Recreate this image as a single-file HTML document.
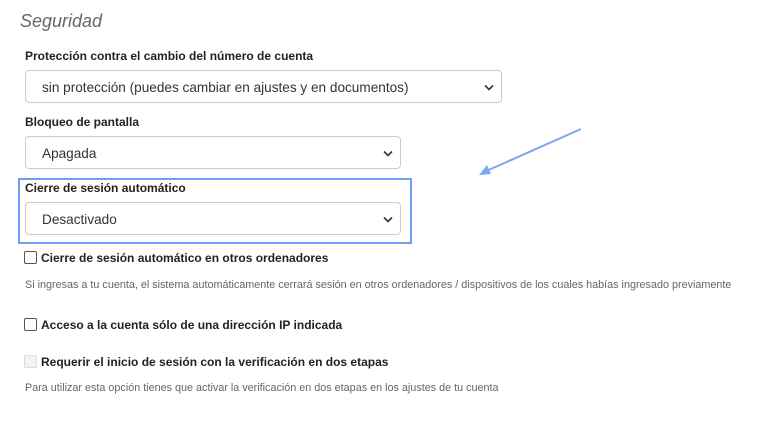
<!DOCTYPE html>
<html><head><meta charset="utf-8"><style>
body{margin:0;background:#fff;font-family:"Liberation Sans",Arial,sans-serif;width:768px;height:421px;position:relative;overflow:hidden;color:#222}
.a{position:absolute}
h1{position:absolute;left:20px;top:11px;margin:0;font-size:18px;font-style:italic;font-weight:normal;color:#666}
.l{position:absolute;left:25px;font-size:12px;font-weight:bold;color:#222}
.s{position:absolute;left:25px;height:31px;border:1px solid #ccc;border-radius:4px;background:#fff;font-size:13.6px;color:#333;line-height:33px;box-sizing:content-box}
.s span{position:absolute;left:16px}
.s svg{position:absolute;right:7px;top:13px}
.cb{position:absolute;left:24px;width:11px;height:11px;border:1px solid #555;border-radius:2px;background:#fff}
.ct{position:absolute;left:41px;font-size:12px;font-weight:bold;color:#222}
.h{position:absolute;left:25px;font-size:10.8px;color:#666}
</style></head><body>
<h1>Seguridad</h1>
<div class="l" style="top:49px">Protección contra el cambio del número de cuenta</div>
<div class="s" style="top:70px;width:475px"><span>sin protección (puedes cambiar en ajustes y en documentos)</span><svg width="10" height="7" viewBox="0 0 10 7"><path d="M1 1.5L5 5.5L9 1.5" stroke="#333" stroke-width="1.6" fill="none"/></svg></div>
<div class="l" style="top:115px">Bloqueo de pantalla</div>
<div class="s" style="top:136px;width:374px"><span>Apagada</span><svg width="10" height="7" viewBox="0 0 10 7"><path d="M1 1.5L5 5.5L9 1.5" stroke="#333" stroke-width="1.6" fill="none"/></svg></div>
<div class="a" style="left:18px;top:178px;width:390px;height:62px;border:2px solid #6e9ef0"></div>
<div class="l" style="top:181px">Cierre de sesión automático</div>
<div class="s" style="top:202px;width:374px"><span>Desactivado</span><svg width="10" height="7" viewBox="0 0 10 7"><path d="M1 1.5L5 5.5L9 1.5" stroke="#333" stroke-width="1.6" fill="none"/></svg></div>
<svg class="a" style="left:470px;top:120px" width="120" height="62"><path d="M111 9L14 52" stroke="#7aa6f2" stroke-width="2"/><path d="M9 55L17 45L21 54Z" fill="#7aa6f2"/></svg>
<div class="cb" style="top:251px"></div><div class="ct" style="top:251px">Cierre de sesión automático en otros ordenadores</div>
<div class="h" style="top:279px">Si ingresas a tu cuenta, el sistema automáticamente cerrará sesión en otros ordenadores / dispositivos de los cuales habías ingresado previamente</div>
<div class="cb" style="top:318px"></div><div class="ct" style="top:318px">Acceso a la cuenta sólo de una dirección IP indicada</div>
<div class="cb" style="top:355px;border-color:#ddd;background:#f4f4f4"></div><div class="ct" style="top:355px">Requerir el inicio de sesión con la verificación en dos etapas</div>
<div class="h" style="top:382px">Para utilizar esta opción tienes que activar la verificación en dos etapas en los ajustes de tu cuenta</div>
</body></html>
